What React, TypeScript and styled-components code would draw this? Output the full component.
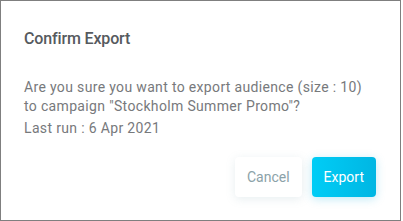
import React from "react";
import styled, { createGlobalStyle } from "styled-components";

const Global = createGlobalStyle`
  html, body { margin: 0; padding: 0; background: #ffffff; }
  body { font-family: Roboto, "Liberation Sans", Arial, sans-serif; }
  * { box-sizing: border-box; }
`;

const Dialog = styled.div`
  width: 401px;
  height: 221px;
  border: 1px solid #7f7f7f;
  background: #ffffff;
  padding: 26px 24px 0 23px;
  display: flex;
  flex-direction: column;
`;

const Title = styled.h2`
  margin: 0;
  font-size: 16px;
  line-height: 24px;
  font-weight: 500;
  letter-spacing: -0.15px;
  color: #565a5e;
`;

const Body = styled.div`
  margin-top: 27px;
  font-size: 14px;
  line-height: 19px;
  letter-spacing: 0.34px;
  color: #77797c;
`;

const Para = styled.p<{ $gap?: number }>`
  margin: ${(p) => p.$gap ?? 0}px 0 0 0;
`;

const Actions = styled.div`
  margin-top: 19px;
  display: flex;
  justify-content: flex-end;
  gap: 10px;
`;

const Button = styled.button<{ $primary?: boolean }>`
  height: 40px;
  padding: 0 12px;
  border: none;
  border-radius: 4px;
  font-family: Roboto, "Liberation Sans", Arial, sans-serif;
  font-size: 14px;
  cursor: pointer;
  color: ${(p) => (p.$primary ? "#ffffff" : "#8ba2a8")};
  background: ${(p) =>
    p.$primary ? "linear-gradient(90deg, #00cdf6 0%, #00b6e3 100%)" : "#ffffff"};
  box-shadow: ${(p) =>
    p.$primary
      ? "0 2px 10px rgba(0, 170, 220, 0.25)"
      : "0 2px 10px rgba(120, 160, 170, 0.18)"};
`;

export default function App() {
  return (
    <>
      <Global />
      <Dialog>
        <Title>Confirm Export</Title>
        <Body>
          <Para>
            Are you sure you want to export audience (size : 10)
            <br />
            to campaign "Stockholm Summer Promo"?
          </Para>
          <Para $gap={3}>Last run : 6 Apr 2021</Para>
        </Body>
        <Actions>
          <Button>Cancel</Button>
          <Button $primary>Export</Button>
        </Actions>
      </Dialog>
    </>
  );
}
